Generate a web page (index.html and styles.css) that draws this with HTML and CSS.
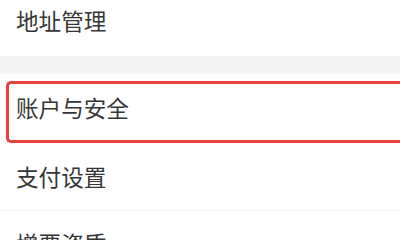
FILE: index.html
```html
<!DOCTYPE html>
<html lang="zh-CN">
<head>
<meta charset="utf-8">
<title>设置</title>
<link rel="stylesheet" href="styles.css">
</head>
<body>
<div class="list">
  <div class="row row-first"><span class="label">地址管理</span></div>
  <div class="gap"></div>
  <div class="row row-highlight">
    <div class="highlight"><span class="label">账户与安全</span></div>
  </div>
  <div class="row row-divided"><span class="label">支付设置</span></div>
  <div class="row"><span class="label">增票资质</span></div>
</div>
</body>
</html>
```
FILE: styles.css
```css
html, body {
  margin: 0;
  padding: 0;
  background: #ffffff;
  overflow: hidden;
}

body {
  width: 400px;
  height: 240px;
  font-family: "Noto Sans CJK SC", "Noto Sans", sans-serif;
  color: #363636;
}

.list {
  display: flex;
  flex-direction: column;
  margin-top: -14px;
}

.row {
  height: 66px;
  display: flex;
  align-items: center;
  padding-left: 16px;
  flex-shrink: 0;
}

.row-first {
  height: 70px;
}

.label {
  font-size: 22.6px;
  line-height: 1;
  white-space: nowrap;
}

.gap {
  height: 18px;
  background: #f5f5f6;
  flex-shrink: 0;
}

.row-highlight {
  height: 70px;
  padding-left: 6px;
  align-items: flex-start;
}

.highlight {
  margin-top: 7px;
  height: 62px;
  flex: 1;
  border: 3px solid #e8403c;
  border-right: none;
  border-radius: 5px 0 0 5px;
  display: flex;
  align-items: center;
  padding-left: 7px;
  padding-bottom: 8px;
  box-sizing: border-box;
}

.row-divided {
  border-bottom: 1px solid #f1f1f1;
}
```
